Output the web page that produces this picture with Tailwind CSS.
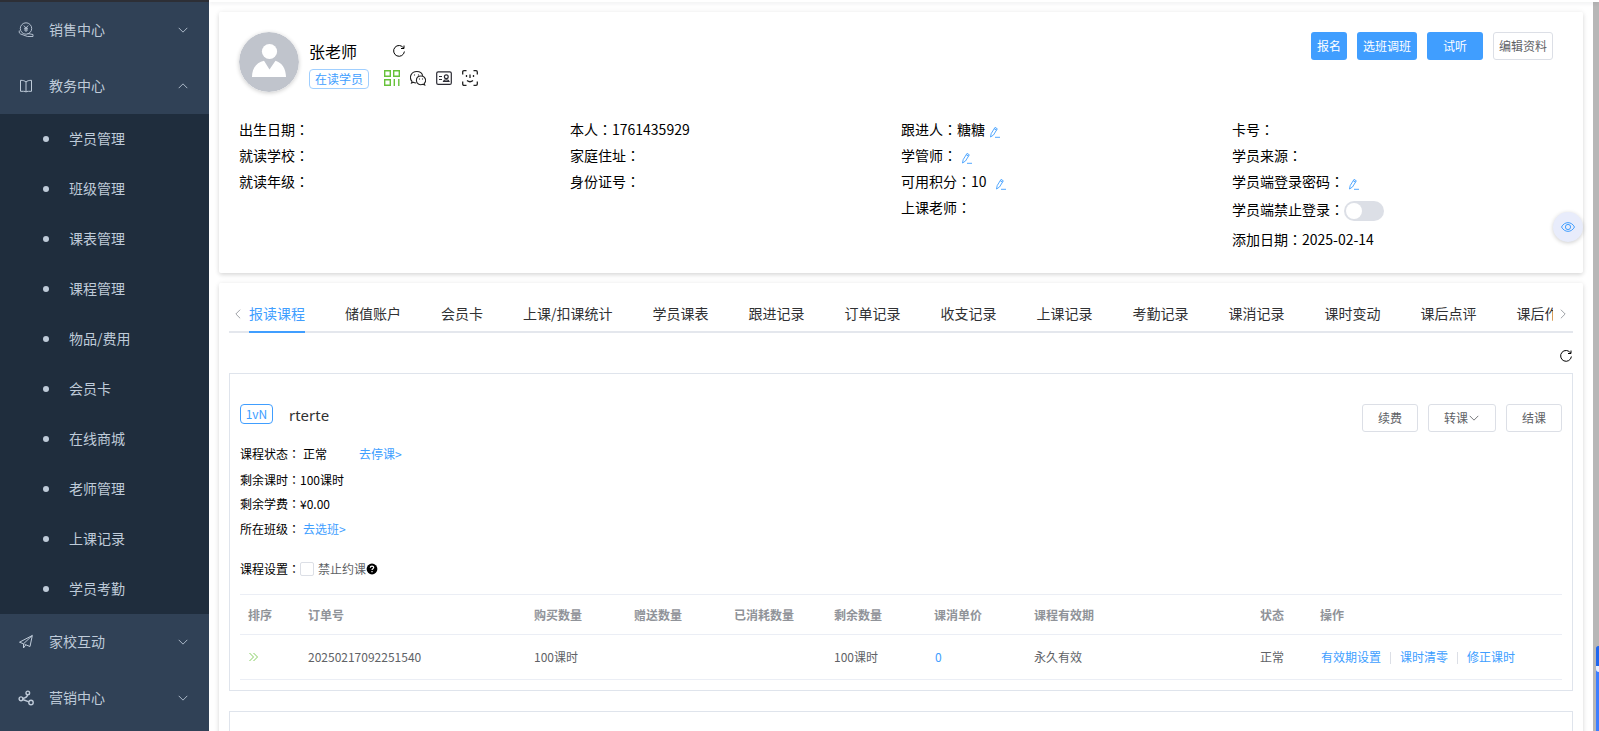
<!DOCTYPE html>
<html lang="zh-CN">
<head>
<meta charset="utf-8">
<meta name="viewport" content="width=device-width, initial-scale=1">
<title>学员详情</title>
<script src="https://cdn.jsdelivr.net/npm/@tailwindcss/browser@4"></script>
</head>
<body class="h-screen overflow-hidden bg-white font-['Noto_Sans_CJK_SC',sans-serif] text-sm text-black">

<svg class="hidden" aria-hidden="true">
  <symbol id="chevron" viewBox="0 0 14 14"><path d="M2 4.500l5 5 5-5" fill="none" stroke="currentColor"/></symbol>
  <symbol id="refresh" viewBox="0 0 14 14"><path d="M11.600 4A5.400 5.400 0 1 0 12.400 7.500M12 1.500v3H9" fill="none" stroke="currentColor" stroke-width="1"/></symbol>
  <symbol id="pencil" viewBox="0 0 12 12"><path d="M2.200 7.600L6 1.400l2.300 1.400L4.500 9 1.500 11zM5.200 2.700l2.300 1.400M6 11.300h5" fill="none" stroke="currentColor" stroke-width=".9"/></symbol>
</svg>

<div class="flex h-full flex-col">
  <div class="flex h-[2px] shrink-0"><div class="w-[209px] bg-[#2d2f36]"></div><div class="relative z-10 flex-1 bg-white shadow-[0_1px_4px_rgba(0,21,41,0.12)]"></div></div>

  <div class="flex min-h-0 flex-1">
    <nav class="w-[209px] shrink-0 overflow-hidden bg-[#304156] text-[#bfcbd9]">
      <button class="flex h-14 w-full items-center pl-[18px] pr-5">
        <svg class="mr-[15px] size-4" viewBox="0 0 16 16" fill="none" stroke="currentColor" stroke-width=".9"><circle cx="8" cy="6.500" r="5.700"/><path d="M5.800 3.500L8 6l2.200-2.500M8 6v4M6 6.300h4M6 8h4M1.300 8.500C.7 11 2 12 4 12.500L9.500 14.500H15V12.500L9.500 11.500"/></svg>
        <span class="flex-1 pb-[2px] text-left">销售中心</span><svg class="size-3"><use href="#chevron"/></svg>
      </button>
      <button class="flex h-14 w-full items-center pl-[18px] pr-5">
        <svg class="mr-[15px] size-4" viewBox="0 0 16 16" fill="none" stroke="currentColor"><path d="M8 4C6.800 2.800 5 2.300 2.500 2.300V13.300H5.500C6.800 13.300 7.500 13.500 8 14C8.500 13.500 9.200 13.300 10.500 13.300H13.500V2.300C11 2.300 9.200 2.800 8 4V14"/></svg>
        <span class="flex-1 pb-[2px] text-left">教务中心</span><svg class="size-3 rotate-180"><use href="#chevron"/></svg>
      </button>
      <ul class="bg-[#1f2d3d]">
        <li><a href="#" class="flex h-[50px] items-center gap-5 pb-[2px] pl-[43px]"><span class="mt-[2px] size-[6px] rounded-full bg-current"></span>学员管理</a></li>
        <li><a href="#" class="flex h-[50px] items-center gap-5 pb-[2px] pl-[43px]"><span class="mt-[2px] size-[6px] rounded-full bg-current"></span>班级管理</a></li>
        <li><a href="#" class="flex h-[50px] items-center gap-5 pb-[2px] pl-[43px]"><span class="mt-[2px] size-[6px] rounded-full bg-current"></span>课表管理</a></li>
        <li><a href="#" class="flex h-[50px] items-center gap-5 pb-[2px] pl-[43px]"><span class="mt-[2px] size-[6px] rounded-full bg-current"></span>课程管理</a></li>
        <li><a href="#" class="flex h-[50px] items-center gap-5 pb-[2px] pl-[43px]"><span class="mt-[2px] size-[6px] rounded-full bg-current"></span>物品/费用</a></li>
        <li><a href="#" class="flex h-[50px] items-center gap-5 pb-[2px] pl-[43px]"><span class="mt-[2px] size-[6px] rounded-full bg-current"></span>会员卡</a></li>
        <li><a href="#" class="flex h-[50px] items-center gap-5 pb-[2px] pl-[43px]"><span class="mt-[2px] size-[6px] rounded-full bg-current"></span>在线商城</a></li>
        <li><a href="#" class="flex h-[50px] items-center gap-5 pb-[2px] pl-[43px]"><span class="mt-[2px] size-[6px] rounded-full bg-current"></span>老师管理</a></li>
        <li><a href="#" class="flex h-[50px] items-center gap-5 pb-[2px] pl-[43px]"><span class="mt-[2px] size-[6px] rounded-full bg-current"></span>上课记录</a></li>
        <li><a href="#" class="flex h-[50px] items-center gap-5 pb-[2px] pl-[43px]"><span class="mt-[2px] size-[6px] rounded-full bg-current"></span>学员考勤</a></li>
      </ul>
      <button class="flex h-14 w-full items-center pl-[18px] pr-5">
        <svg class="mr-[15px] size-4" viewBox="0 0 16 16" fill="none" stroke="currentColor" stroke-linejoin="round"><path d="M1.500 8.200L14.300 1.500 12 12.500 7.800 10.800 5.500 14V9.800L1.500 8.200M5.500 9.800L14.300 1.500M7.800 10.800L6.500 10.200"/></svg>
        <span class="flex-1 pb-[2px] text-left">家校互动</span><svg class="size-3"><use href="#chevron"/></svg>
      </button>
      <button class="flex h-14 w-full items-center pl-[18px] pr-5">
        <svg class="mr-[15px] size-4" viewBox="0 0 16 16" fill="none" stroke="currentColor" stroke-width="1.400"><circle cx="3" cy="8.800" r="1.900"/><circle cx="9.800" cy="2.900" r="1.800"/><circle cx="13" cy="12.500" r="2.200"/><path d="M4.900 8.500C8 8 9.300 6.500 9.600 4.700M4.800 9.500L10.900 11.800"/></svg>
        <span class="flex-1 pb-[2px] text-left">营销中心</span><svg class="size-3"><use href="#chevron"/></svg>
      </button>
    </nav>

    <main class="min-w-0 flex-1 space-y-[10px] overflow-hidden p-[10px]">
      <section class="rounded-xs px-5 pt-5 pb-[19px] shadow-[0_2px_4px_rgba(0,0,0,0.12),0_0_6px_rgba(0,0,0,0.06)]">
        <div class="flex items-start">
          <svg class="size-[60px] rounded-full shadow-[0_1px_4px_rgba(0,0,0,0.2)]" viewBox="0 0 60 60"><circle cx="30" cy="30" r="30" fill="#c0c4cc"/><circle cx="30.500" cy="19.500" r="7.600" fill="#fff"/><path d="M13 45C13 36 18 30 25 28.700L30.500 37.500 36.500 28.700C43 30.500 47 37 47 45Z" fill="#fff"/></svg>
          <div class="ml-[10px] pt-[7px]">
            <div class="flex h-6 items-center text-base"><h1 class="w-[83px]">张老师</h1><button aria-label="刷新"><svg class="size-[14px]"><use href="#refresh"/></svg></button></div>
            <div class="mt-[6px] flex h-5 items-center gap-[10px]">
              <span class="mr-[5px] flex h-5 w-[60px] items-center justify-center rounded-sm border border-[#a0cfff] pb-px text-xs text-[#409eff]">在读学员</span>
              <svg class="mb-[2px] size-4" viewBox="0 0 16 16" fill="none" stroke="#67c23a" stroke-width="1.400"><path d="M.7.700h5.600v5.600H.7zM9.700.700h5.600v5.600H9.700zM.7 9.700h5.600v5.600H.7zM10.300 9v7M14.800 9v7"/></svg>
              <svg class="mb-[2px] size-4" viewBox="0 0 16 16" fill="none" stroke="#222" stroke-width="1.100"><path d="M6 13C4.800 13 4 12.700 3.300 12.300L1.500 13 2 11.300C-1.300 7.800 1 1.500 6.800 1.500C10 1.500 12.300 3.500 12.700 5.800"/><path d="M14.200 13.500L14.700 15 13 14.300C9.500 15.700 6.400 13.500 6.400 10.500C6.400 7.700 8.500 6 11 6C15.300 6 17 11 14.200 13.500Z"/><path d="M4.500 4.500v1M8.500 4.500v1M9.500 8.500v1M12.500 8.500v1"/></svg>
              <svg class="mb-[2px] size-4" viewBox="0 0 16 16" fill="none" stroke="#2b2b33" stroke-width="1.200"><rect x=".7" y="1.800" width="14.600" height="12.600" rx="1.500"/><path d="M3 6.500h3M3 9.500h3M7.500 11.500C8 9.300 12.500 9.300 13 11.500Z"/><circle cx="10.300" cy="6.800" r="1.900"/></svg>
              <svg class="mb-[2px] size-4" viewBox="0 0 16 16" fill="none" stroke="#222" stroke-width="1.300"><path d="M.7 4.500V2Q.7.700 2 .700h2.500M11.500.700H14Q15.300.700 15.300 2v2.500M15.300 11.500V14Q15.300 15.300 14 15.300h-2.500M4.500 15.300H2Q.7 15.300.7 14v-2.500M4.500 5v2M11.500 5v2M8 4.500v3.500M5 10.500Q8 13 11 10.500"/></svg>
            </div>
          </div>
          <div class="mr-[10px] ml-auto flex gap-[10px] text-xs text-white">
            <button class="h-7 w-9 rounded-[3px] bg-[#409eff]">报名</button>
            <button class="h-7 w-[60px] rounded-[3px] bg-[#409eff]">选班调班</button>
            <button class="h-7 w-14 rounded-[3px] bg-[#409eff]">试听</button>
            <button class="h-7 w-[60px] rounded-[3px] border border-[#dcdfe6] text-[#606266]">编辑资料</button>
          </div>
        </div>

        <div class="mt-6 grid grid-cols-4 leading-[26px]">
          <div>
            <p>出生日期<span lang="ja" class="inline-block font-['Noto_Sans_CJK_JP']">：</span></p>
            <p>就读学校<span lang="ja" class="inline-block font-['Noto_Sans_CJK_JP']">：</span></p>
            <p>就读年级<span lang="ja" class="inline-block font-['Noto_Sans_CJK_JP']">：</span></p>
          </div>
          <div>
            <p>本人<span lang="ja" class="inline-block font-['Noto_Sans_CJK_JP']">：</span>1761435929</p>
            <p>家庭住址<span lang="ja" class="inline-block font-['Noto_Sans_CJK_JP']">：</span></p>
            <p>身份证号<span lang="ja" class="inline-block font-['Noto_Sans_CJK_JP']">：</span></p>
          </div>
          <div>
            <p class="flex items-center">跟进人<span lang="ja" class="inline-block font-['Noto_Sans_CJK_JP']">：</span>糖糖<button class="ml-1 pt-[6px] text-[#409eff]" aria-label="编辑跟进人"><svg class="size-3"><use href="#pencil"/></svg></button></p>
            <p class="flex items-center">学管师<span lang="ja" class="inline-block font-['Noto_Sans_CJK_JP']">：</span><button class="ml-1 pt-[6px] text-[#409eff]" aria-label="编辑学管师"><svg class="size-3"><use href="#pencil"/></svg></button></p>
            <p class="flex items-center">可用积分<span lang="ja" class="inline-block font-['Noto_Sans_CJK_JP']">：</span>10<button class="ml-2 pt-[6px] text-[#409eff]" aria-label="编辑积分"><svg class="size-3"><use href="#pencil"/></svg></button></p>
            <p>上课老师<span lang="ja" class="inline-block font-['Noto_Sans_CJK_JP']">：</span></p>
          </div>
          <div>
            <p>卡号<span lang="ja" class="inline-block font-['Noto_Sans_CJK_JP']">：</span></p>
            <p>学员来源<span lang="ja" class="inline-block font-['Noto_Sans_CJK_JP']">：</span></p>
            <p class="flex items-center">学员端登录密码<span lang="ja" class="inline-block font-['Noto_Sans_CJK_JP']">：</span><button class="ml-1 pt-[6px] text-[#409eff]" aria-label="编辑登录密码"><svg class="size-3"><use href="#pencil"/></svg></button></p>
            <p class="flex h-[30px] items-center"><label for="ban">学员端禁止登录<span lang="ja" class="inline-block font-['Noto_Sans_CJK_JP']">：</span></label><input id="ban" type="checkbox" role="switch" class="mt-1 h-5 w-10 appearance-none rounded-full bg-[#dcdfe6] p-[2px] before:block before:size-4 before:rounded-full before:bg-white"></p>
            <p class="leading-[30px]">添加日期<span lang="ja" class="inline-block font-['Noto_Sans_CJK_JP']">：</span>2025-02-14</p>
          </div>
        </div>
      </section>

      <section class="h-[600px] rounded-xs px-[10px] pt-[10px] shadow-[0_2px_4px_rgba(0,0,0,0.12),0_0_6px_rgba(0,0,0,0.06)]">
        <div class="flex h-10 items-stretch border-b-2 border-[#e4e7ed] text-[#303133]">
          <button class="w-5 pt-1 pl-[3px] text-[#909399]" aria-label="向前"><svg class="size-3 rotate-90"><use href="#chevron"/></svg></button>
          <div class="-mb-[2px] flex flex-1 gap-10 overflow-hidden whitespace-nowrap">
            <button class="shrink-0 border-b-2 border-[#409eff] pt-[2px] text-[#409eff]">报读课程</button>
            <button class="shrink-0">储值账户</button>
            <button class="shrink-0">会员卡</button>
            <button class="shrink-0">上课/扣课统计</button>
            <button class="shrink-0">学员课表</button>
            <button class="shrink-0">跟进记录</button>
            <button class="shrink-0">订单记录</button>
            <button class="shrink-0">收支记录</button>
            <button class="shrink-0">上课记录</button>
            <button class="shrink-0">考勤记录</button>
            <button class="shrink-0">课消记录</button>
            <button class="shrink-0">课时变动</button>
            <button class="shrink-0">课后点评</button>
            <button class="shrink-0">课后作业</button>
          </div>
          <button class="w-5 pt-1 pl-1 text-[#909399]" aria-label="向后"><svg class="size-3 -rotate-90"><use href="#chevron"/></svg></button>
        </div>
        <div class="flex h-10 items-center justify-end pt-[6px]"><button aria-label="刷新课程"><svg class="size-[14px]"><use href="#refresh"/></svg></button></div>

        <article class="border border-[#dfe4ec] px-[10px] pt-[30px] pb-[10px] text-xs">
          <div class="flex items-start">
            <span class="flex h-5 w-[33px] items-center justify-center rounded-sm border border-[#409eff] text-[#409eff]">1vN</span>
            <h2 class="ml-4 flex-1 font-['Noto_Sans'] text-[15px] leading-[22px] text-[#303133]">rterte</h2>
            <div class="flex gap-[10px] text-[#606266]">
              <button class="h-7 w-14 rounded-[3px] border border-[#dcdfe6]">续费</button>
              <button class="flex h-7 w-[68px] items-center justify-center rounded-[3px] border border-[#dcdfe6]">转课<svg class="size-3"><use href="#chevron"/></svg></button>
              <button class="h-7 w-14 rounded-[3px] border border-[#dcdfe6]">结课</button>
            </div>
          </div>
          <div class="pt-2">
            <p class="leading-7">课程状态<span lang="ja" class="mr-[3px] inline-block font-['Noto_Sans_CJK_JP']">：</span>正常<a href="#" class="ml-8 text-[#409eff]">去停课&gt;</a></p>
            <p class="leading-6">剩余课时<span lang="ja" class="inline-block font-['Noto_Sans_CJK_JP']">：</span>100课时</p>
            <p class="leading-6">剩余学费<span lang="ja" class="inline-block font-['Noto_Sans_CJK_JP']">：</span>¥0.00</p>
            <p class="leading-[26px]">所在班级<span lang="ja" class="mr-[3px] inline-block font-['Noto_Sans_CJK_JP']">：</span><a href="#" class="text-[#409eff]">去选班&gt;</a></p>
            <div class="mt-[13px] mb-[11px] flex h-7 items-center">课程设置<span lang="ja" class="inline-block font-['Noto_Sans_CJK_JP']">：</span><input id="nobook" type="checkbox" class="size-[14px] appearance-none rounded-xs border border-[#dcdfe6] bg-white"><label for="nobook" class="pl-1 text-[#606266]">禁止约课</label><svg class="size-3" viewBox="0 0 12 12"><circle cx="6" cy="6" r="5.400" fill="#000"/><path d="M4.300 4.800C4.300 2.600 7.700 2.600 7.700 4.600C7.700 5.700 6 5.700 6 7M6 8v1.200" fill="none" stroke="#fff" stroke-width="1.200"/></svg></div>
          </div>
          <table class="w-full table-fixed border-collapse text-left text-[#606266]">
            <colgroup><col class="w-[60px]"><col><col class="w-[100px]"><col class="w-[100px]"><col class="w-[100px]"><col class="w-[100px]"><col class="w-[100px]"><col><col class="w-[60px]"><col class="w-[250px]"></colgroup>
            <thead class="text-[#909399]">
              <tr class="h-10 border-y border-[#ebeef5]"><th class="px-2 font-bold">排序</th><th class="px-2 font-bold">订单号</th><th class="px-2 font-bold">购买数量</th><th class="px-2 font-bold">赠送数量</th><th class="px-2 font-bold">已消耗数量</th><th class="px-2 font-bold">剩余数量</th><th class="px-2 font-bold">课消单价</th><th class="px-2 font-bold">课程有效期</th><th class="px-2 font-bold">状态</th><th class="px-2 font-bold">操作</th></tr>
            </thead>
            <tbody>
              <tr class="h-[45px] border-b border-[#ebeef5]">
                <td class="px-2"><svg class="ml-px size-[10px]" viewBox="0 0 10 10" fill="none" stroke="#85ce61"><path d="M.5 1l4 4-4 4M4.500 1l4 4-4 4"/></svg></td>
                <td class="px-2">20250217092251540</td><td class="px-2">100课时</td><td></td><td></td><td class="px-2">100课时</td>
                <td class="px-[9px]"><a href="#" class="text-[#409eff]">0</a></td><td class="px-2">永久有效</td><td class="px-2">正常</td>
                <td class="px-[9px]"><div class="flex items-center gap-[9px] whitespace-nowrap text-[#409eff]"><a href="#">有效期设置</a><span class="mt-[2px] h-3 w-px bg-[#dcdfe6]"></span><a href="#">课时清零</a><span class="mt-[2px] h-3 w-px bg-[#dcdfe6]"></span><a href="#">修正课时</a></div></td>
              </tr>
            </tbody>
          </table>
        </article>
        <article class="mt-5 h-40 border border-[#dfe4ec]"></article>
      </section>
    </main>
    <div class="w-[6px] shrink-0 bg-[#b7b7b7]"></div>
  </div>
</div>

<button class="fixed top-[212px] right-4 flex size-[30px] items-center justify-center rounded-full bg-[#e8ecfb] text-[#409eff] shadow-[0_1px_4px_rgba(0,0,0,0.2)]" aria-label="显示"><svg class="size-[14px]" viewBox="0 0 14 14" fill="none" stroke="currentColor"><path d="M.5 7C3.500 1.200 10.500 1.200 13.500 7C10.500 12.800 3.500 12.800.5 7Z"/><circle cx="7" cy="7" r="2.600"/></svg></button>
<div class="fixed right-0 bottom-0 flex h-[85px] w-[3px] flex-col rounded-tl-[3px] bg-[#3d7eff]"><div class="h-5 rounded-tl-[3px] bg-[#1f66ee]"></div><div class="h-[6px] rounded-bl-full bg-[#e6efff]"></div></div>
</body>
</html>
